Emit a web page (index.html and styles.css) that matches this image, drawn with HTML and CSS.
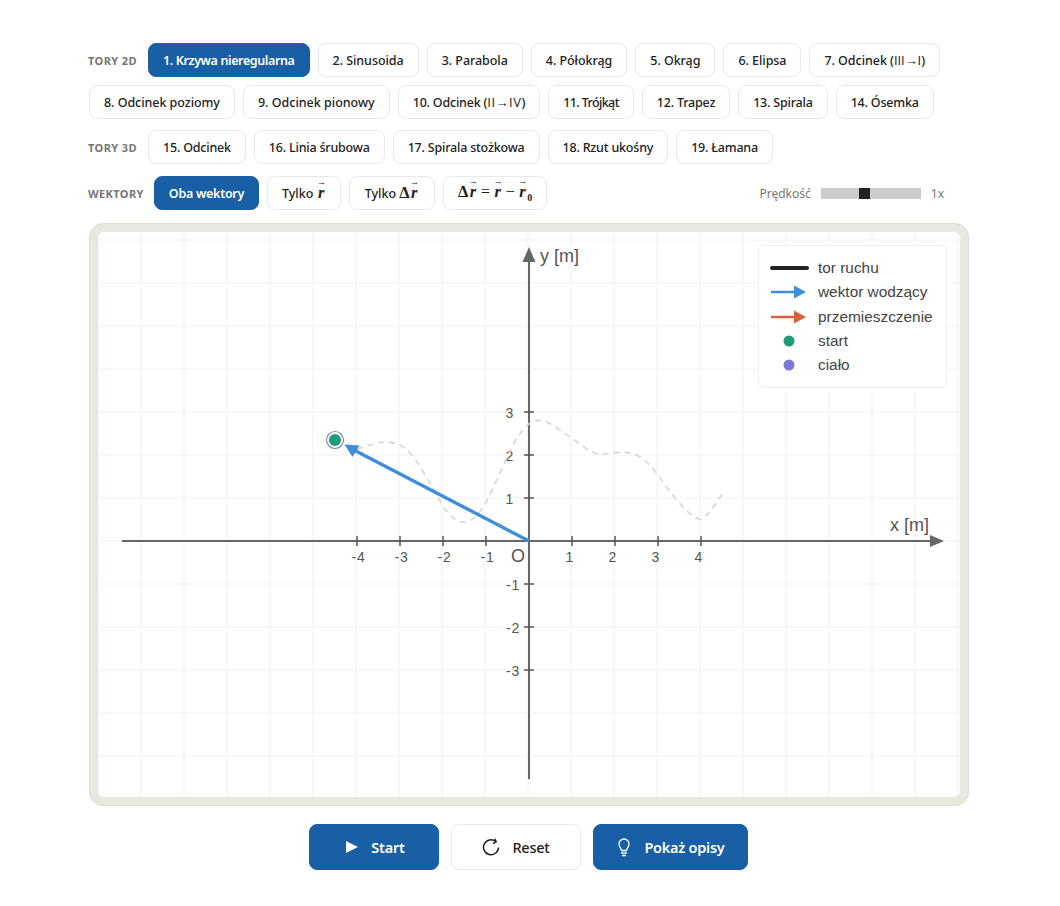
FILE: index.html
```html
<!DOCTYPE html>
<html lang="pl">
<head>
    <meta charset="UTF-8">
    <meta name="viewport" content="width=device-width, initial-scale=1.0">
    <title>Tor ruchu i wektory</title>
    <link rel="stylesheet" href="styles.css">
</head>
<body>
    <main class="page">
        <!-- Wybór toru -->
        <div class="row">
            <span class="row-label">TORY 2D</span>
            <button class="pill active">1. Krzywa nieregularna</button>
            <button class="pill">2. Sinusoida</button>
            <button class="pill">3. Parabola</button>
            <button class="pill">4. Półokrąg</button>
            <button class="pill">5. Okrąg</button>
            <button class="pill">6. Elipsa</button>
            <button class="pill">7. Odcinek (<span class="roman">III→I</span>)</button>
            <button class="pill">8. Odcinek poziomy</button>
            <button class="pill wide">9. Odcinek pionowy</button>
            <button class="pill tight">10. Odcinek (<span class="roman">II→IV</span>)</button>
            <button class="pill tighter">11. Trójkąt</button>
            <button class="pill tight">12. Trapez</button>
            <button class="pill tight">13. Spirala</button>
            <button class="pill tight">14. Ósemka</button>
        </div>
        <div class="row row-3d">
            <span class="row-label">TORY 3D</span>
            <button class="pill tight">15. Odcinek</button>
            <button class="pill tight">16. Linia śrubowa</button>
            <button class="pill tight">17. Spirala stożkowa</button>
            <button class="pill tight">18. Rzut ukośny</button>
            <button class="pill tight">19. Łamana</button>
        </div>

        <!-- Wektory i prędkość -->
        <div class="row row-vectors">
            <span class="row-label">WEKTORY</span>
            <button class="pill active both">Oba wektory</button>
            <button class="pill">Tylko <span class="math"><i class="vec">r</i></span></button>
            <button class="pill delta">Tylko <span class="math">Δ<i class="vec">r</i></span></button>
            <button class="pill"><span class="math">Δ<i class="vec">r</i><span class="op">=</span><i class="vec">r</i><span class="op">−</span><i class="vec">r</i><sub>0</sub></span></button>
            <div class="speed">
                <label for="speed">Prędkość</label>
                <input type="range" id="speed" min="0" max="3" step="0.01" value="1.3">
                <span>1x</span>
            </div>
        </div>

        <!-- Wykres -->
        <div class="frame">
            <div class="plot">
                <svg class="chart" width="862" height="565" viewBox="98 232 862 565">
                    <defs>
                        <pattern id="grid" x="119.500" y="218.500" width="43" height="43" patternUnits="userSpaceOnUse">
                            <path d="M21.500 0V43" class="grid-line"/>
                            <path d="M0 21.500H43" class="grid-line"/>
                        </pattern>
                    </defs>
                    <rect x="98" y="232" width="862" height="565" fill="url(#grid)"/>

                    <path class="axis" d="M122 541H932M529 779V260"/>
                    <path class="axis-head" d="M944 541L930 535V547ZM529 247L522.500 262H535.500Z"/>
                    <path class="tick" d="M357 536V546M400 536V546M443 536V546M486 536V546M572 536V546M615 536V546M658 536V546M701 536V546"/>
                    <path class="tick" d="M524 412H534M524 455H534M524 498H534M524 584H534M524 627H534M524 670H534"/>

                    <g class="tick-label">
                        <text class="neg" x="351.500" y="562">-4</text>
                        <text class="neg" x="394.500" y="562">-3</text>
                        <text class="neg" x="437.500" y="562">-2</text>
                        <text class="neg" x="480.500" y="562">-1</text>
                        <text x="565.500" y="562">1</text>
                        <text x="608.500" y="562">2</text>
                        <text x="651.500" y="562">3</text>
                        <text x="694.500" y="562">4</text>
                        <text x="505.500" y="418">3</text>
                        <text x="505.500" y="461">2</text>
                        <text x="505.500" y="504">1</text>
                        <text class="neg" x="506" y="590">-1</text>
                        <text class="neg" x="506" y="633">-2</text>
                        <text class="neg" x="506" y="676">-3</text>
                    </g>
                    <text class="axis-name" x="511" y="562">O</text>
                    <text class="axis-name" x="890" y="531">x [m]</text>
                    <text class="axis-name" x="540" y="262">y [m]</text>

                    <path class="trail" d="M357 449 Q372 444 381 442.500 Q390 441 400 445 Q410 450 421.500 469 Q433 488 440 501 Q447 514 456 520 Q465 525 474 518 Q483 510 491.500 491.500 Q500 473 506.500 458 Q513 443 520.500 433 Q528 422 536.500 420.500 Q545 419 558.500 429 Q572 438 582.500 446 Q593 454 600 454 Q607 454 618.500 452.500 Q630 451 640 457 Q650 463 661.500 480 Q673 497 685 509 Q697 521 702 519 Q707 517 723 493"/>

                    <path class="radius" d="M529 541L352 449"/>
                    <path class="radius-head" d="M344.500 444.500L359.500 445.500L352.500 457Z"/>

                    <circle class="body-ring" cx="335" cy="440" r="8.500"/>
                    <circle class="body-dot" cx="335" cy="440" r="6"/>
                </svg>

                <ul class="legend">
                    <li>
                        <svg width="40" height="14" viewBox="0 0 40 14"><path d="M3 7H38" stroke="#222" stroke-width="4" stroke-linecap="round"/></svg>
                        tor ruchu
                    </li>
                    <li>
                        <svg width="40" height="14" viewBox="0 0 40 14"><path d="M2 7H27" stroke="#3f8edc" stroke-width="2.500"/><path d="M25 0.500L37 7L25 13.500Z" fill="#3f8edc"/></svg>
                        wektor wodzący
                    </li>
                    <li>
                        <svg width="40" height="14" viewBox="0 0 40 14"><path d="M2 7H27" stroke="#d8603a" stroke-width="2.500"/><path d="M25 0.500L37 7L25 13.500Z" fill="#d8603a"/></svg>
                        przemieszczenie
                    </li>
                    <li>
                        <svg width="40" height="14" viewBox="0 0 40 14"><circle cx="20" cy="7" r="5.500" fill="#1c9e74"/></svg>
                        start
                    </li>
                    <li>
                        <svg width="40" height="14" viewBox="0 0 40 14"><circle cx="20" cy="7" r="5.500" fill="#7f77dd"/></svg>
                        ciało
                    </li>
                </ul>
            </div>
        </div>

        <!-- Sterowanie -->
        <div class="controls">
            <button class="ctrl primary start">
                <svg width="16" height="16" viewBox="0 0 16 16"><path d="M3 2V14L15 8Z" fill="#fff"/></svg>
                Start
            </button>
            <button class="ctrl reset">
                <svg width="18" height="18" viewBox="0 0 18 18" fill="none" stroke="#222" stroke-width="1.500"><path d="M16.500 9.500A7.500 7.500 0 1 1 13.800 3.500"/><path d="M12.800 0.800L14.200 3.900L11 5.500" stroke-linejoin="round"/></svg>
                Reset
            </button>
            <button class="ctrl primary hints">
                <svg width="16" height="20" viewBox="0 0 16 20" fill="none" stroke="#fff" stroke-width="1.300" stroke-linecap="round"><path d="M5.500 13.500C5.500 11.500 3 10.500 3 7A5 5 0 0 1 13 7C13 10.500 10.500 11.500 10.500 13.500Z"/><path d="M5.500 16H10.500M6.500 18.500H9.500"/></svg>
                Pokaż opisy
            </button>
        </div>
    </main>
</body>
</html>
```

FILE: styles.css
```css
* {
    box-sizing: border-box;
}
body {
    font-family: "Noto Sans", Arial, sans-serif;
    background-color: #fff;
    color: #222;
    margin: 0;
    padding: 0;
}
.page {
    width: 880px;
    margin-left: 89px;
    padding-top: 43px;
}
.row {
    display: flex;
    flex-wrap: wrap;
    align-items: center;
    gap: 8px;
}
.row-3d {
    margin-top: 11px;
}
.row-vectors {
    margin-top: 12px;
    flex-wrap: nowrap;
}
.row-label {
    min-width: 50px;
    font-size: 11px;
    font-weight: 700;
    letter-spacing: 0.4px;
    color: #777;
    margin-left: -1px;
    margin-right: 2px;
}
.pill {
    height: 34px;
    padding: 0 14px;
    font-family: inherit;
    font-size: 12.5px;
    font-weight: 500;
    letter-spacing: -0.05px;
    color: #222;
    background-color: #fff;
    border: 1px solid #e8e8e8;
    border-radius: 8px;
    white-space: nowrap;
    cursor: pointer;
}
.pill.wide {
    letter-spacing: 0;
}
.pill.tight {
    letter-spacing: -0.2px;
}
.pill.tighter {
    letter-spacing: -0.6px;
}
.pill.delta {
    padding: 0 15px;
}
.pill.active {
    background-color: #185fa5;
    border-color: #185fa5;
    color: #fff;
    font-weight: 600;
    letter-spacing: -0.38px;
}
.pill.active.both {
    letter-spacing: -0.28px;
}
.roman {
    font-family: "Open Sans", sans-serif;
    font-size: 13px;
}
.tight .roman {
    letter-spacing: 0.5px;
}
.math {
    font-family: "Liberation Serif", serif;
    font-size: 16.5px;
    font-weight: 700;
    letter-spacing: 0;
    margin-left: 6px;
}
.pill .math:only-child {
    margin-left: 0;
}
.op {
    margin: 0 3px;
    font-weight: 400;
}
.vec {
    position: relative;
    display: inline-block;
    margin: 0 1.5px;
    font-style: italic;
}
.vec::before {
    content: "→";
    position: absolute;
    left: -1px;
    top: -6px;
    font-size: 9px;
    font-style: normal;
}
.math sub {
    font-size: 10px;
}
.speed {
    display: flex;
    align-items: center;
    gap: 10px;
    margin-left: auto;
    margin-right: 25px;
    font-size: 12px;
    color: #777;
}
.speed input {
    appearance: none;
    -webkit-appearance: none;
    width: 100px;
    height: 11px;
    margin: 0;
    background-color: #ccc;
}
.speed input::-webkit-slider-thumb {
    -webkit-appearance: none;
    width: 11px;
    height: 11px;
    background-color: #222;
}
.frame {
    margin-top: 13px;
    padding: 8px;
    background-color: #e8e8e0;
    border: 1px solid #dddcd2;
    border-radius: 14px;
}
.plot {
    position: relative;
    background-color: #fff;
    border-radius: 6px;
    overflow: hidden;
    height: 565px;
}
.chart {
    display: block;
}
.grid-line {
    fill: none;
    stroke: #f4f4f4;
    stroke-width: 1.6;
}
.axis {
    fill: none;
    stroke: #666;
    stroke-width: 2;
}
.axis-head {
    fill: #666;
}
.tick {
    fill: none;
    stroke: #555;
    stroke-width: 1.5;
}
.tick-label {
    font-family: "Liberation Sans", Arial, sans-serif;
    font-size: 14px;
    fill: #555;
}
.tick-label .neg {
    letter-spacing: 0.8px;
}
.axis-name {
    font-family: "Liberation Sans", Arial, sans-serif;
    font-size: 18px;
    fill: #555;
}
.trail {
    fill: none;
    stroke: #d8d8d8;
    stroke-width: 1.8;
    stroke-dasharray: 6 5;
}
.radius {
    fill: none;
    stroke: #3f8edc;
    stroke-width: 3.4;
}
.radius-head {
    fill: #3f8edc;
}
.body-ring {
    fill: #fff;
    stroke: #8a84c8;
    stroke-width: 1.2;
}
.body-dot {
    fill: #1c9e74;
}
.legend {
    position: absolute;
    top: 13px;
    right: 13px;
    width: 189px;
    height: 143px;
    margin: 0;
    padding: 10px 0 0 10px;
    list-style: none;
    background-color: rgba(255, 255, 255, 0.92);
    border: 1px solid #eee;
    border-radius: 6px;
    font-family: "Liberation Sans", Arial, sans-serif;
    font-size: 15.4px;
    color: #444;
}
.legend li {
    display: flex;
    align-items: center;
    gap: 9px;
    height: 24.3px;
}
.controls {
    display: flex;
    justify-content: center;
    gap: 12px;
    margin-top: 18px;
    padding-right: 1px;
    padding-bottom: 36px;
}
.ctrl {
    display: flex;
    align-items: center;
    justify-content: center;
    gap: 12px;
    height: 46px;
    font-family: inherit;
    font-size: 14.5px;
    font-weight: 600;
    letter-spacing: -0.25px;
    border-radius: 8px;
    cursor: pointer;
}
.ctrl.primary {
    background-color: #185fa5;
    border: 1px solid #185fa5;
    color: #fff;
}
.ctrl.reset {
    width: 130px;
    background-color: #fff;
    border: 1px solid #e8e8e8;
    color: #222;
    font-weight: 500;
}
.ctrl.start {
    width: 130px;
}
.ctrl.hints {
    width: 155px;
}
```
